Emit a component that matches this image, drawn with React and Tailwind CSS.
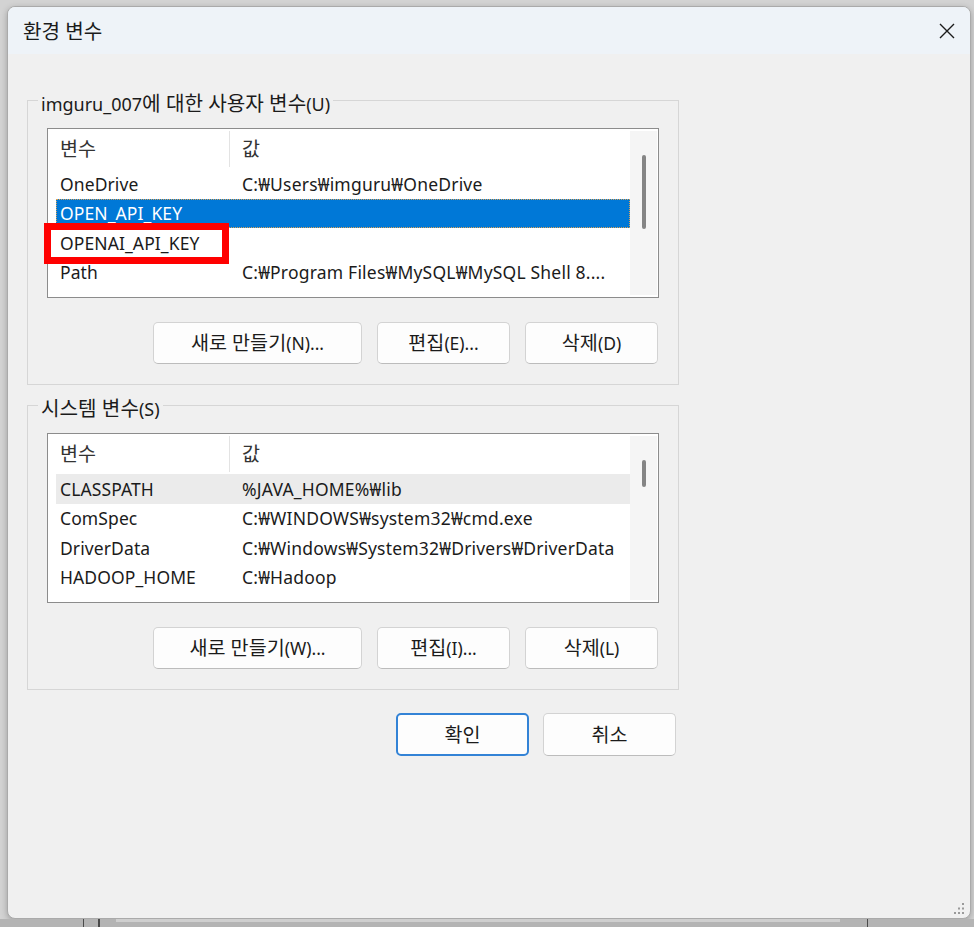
import React from "react";

function T({ s }) {
  const parts = s.split(/([\uAC00-\uD7A3]+(?:\s[\uAC00-\uD7A3]+)*)/);
  return (
    <>
      {parts.map((p, i) =>
        /[\uAC00-\uD7A3]/.test(p) ? (
          <span key={i} className="text-[1.12em]">
            {p}
          </span>
        ) : (
          <React.Fragment key={i}>{p}</React.Fragment>
        )
      )}
    </>
  );
}

const userRows = [
  { name: "OneDrive", value: "C:₩Users₩imguru₩OneDrive" },
  { name: "OPEN_API_KEY", value: "", sel: true },
  { name: "OPENAI_API_KEY", value: "" },
  { name: "Path", value: "C:₩Program Files₩MySQL₩MySQL Shell 8...." },
];

const sysRows = [
  { name: "CLASSPATH", value: "%JAVA_HOME%₩lib", hover: true },
  { name: "ComSpec", value: "C:₩WINDOWS₩system32₩cmd.exe" },
  { name: "DriverData", value: "C:₩Windows₩System32₩Drivers₩DriverData" },
  { name: "HADOOP_HOME", value: "C:₩Hadoop" },
];

function Btn({ children, className = "", primary = false }) {
  return (
    <div
      className={`flex items-center justify-center rounded-[5px] bg-[#fdfdfd] text-[17.5px] text-[#1b1b1b] ${
        primary
          ? "border-2 border-[#3383d6]"
          : "border border-[#d3d3d3] border-b-[#bcbcbc]"
      } ${className}`}
    >
      <T s={children} />
    </div>
  );
}

function VarList({ rows, thumb }) {
  return (
    <div className="flex h-[170px] w-[612px] overflow-hidden border border-[#8c8c8c] bg-white text-[17.5px]">
      <div className="flex min-w-0 flex-1 flex-col pl-[8px]">
        <div className="flex h-[40px] shrink-0 items-center text-[#333333]">
          <div className="flex h-[36px] w-[174px] items-center border-r border-[#e3e3e3] pl-[4px]">
            <T s="변수" />
          </div>
          <div className="pl-[12px]">
            <T s="값" />
          </div>
        </div>
        {rows.map((r) => (
          <div
            key={r.name}
            className={`flex h-[29.5px] shrink-0 items-center ${
              r.sel
                ? "bg-[#0078d7] text-white outline-1 outline-dotted outline-[#d8a25a] -outline-offset-1"
                : r.hover
                ? "bg-[#ebebeb]"
                : ""
            }`}
          >
            <div className="w-[186px] shrink-0 whitespace-nowrap pl-[4px] tracking-[0.1px]">{r.name}</div>
            <div className="min-w-0 flex-1 overflow-hidden whitespace-nowrap tracking-[0.2px]">{r.value}</div>
          </div>
        ))}
      </div>
      <div className="my-[2px] mr-[1px] flex w-[27px] shrink-0 flex-col items-center bg-[#f5f5f5]">
        <div className={`w-[4px] rounded-full bg-[#858585] ${thumb}`} />
      </div>
    </div>
  );
}

function Group({ label, rows, thumb, buttons, className = "" }) {
  return (
    <fieldset className={`w-[651px] border border-[#d6d6d6] ${className}`}>
      <legend className="ml-[10px] h-[30px] px-[3px] pt-[6px] text-[18px] leading-[24px] text-[#1b1b1b]">
        <T s={label} />
      </legend>
      <div className="px-[19px] pb-[20px] pt-[13px]">
        <VarList rows={rows} thumb={thumb} />
        <div className="mt-[24px] flex justify-end gap-[15px] pr-[1px]">
          <Btn className="h-[42px] w-[209px]">{buttons[0]}</Btn>
          <Btn className="h-[42px] w-[133px]">{buttons[1]}</Btn>
          <Btn className="h-[42px] w-[133px]">{buttons[2]}</Btn>
        </div>
      </div>
    </fieldset>
  );
}

export default function App() {
  return (
    <div className="relative flex h-[927px] w-[974px] flex-col overflow-hidden bg-[#d3d3d3] pl-[7px] pt-[6px] font-['Noto_Sans','Noto_Sans_CJK_KR',sans-serif] text-[17.5px] text-[#1b1b1b]">
      <div className="flex h-[913px] w-[964px] shrink-0 flex-col overflow-hidden rounded-[8px] border border-[#aaaaaa] bg-[#f0f0f0] shadow-[0_2px_6px_rgba(0,0,0,0.25)]">
        <div className="flex h-[47px] shrink-0 items-center justify-between bg-[#eef3f8] pl-[15px] pr-[15px]">
          <span className="pt-[1px] text-[18px] text-[#1b1b1b]">
            <T s="환경 변수" />
          </span>
          <svg width="16" height="16" viewBox="0 0 16 16" fill="none">
            <path d="M1 1L15 15M15 1L1 15" stroke="#1b1b1b" strokeWidth="1.4" />
          </svg>
        </div>
        <div className="flex flex-1 flex-col pl-[19px] pt-[31px]">
          <Group
            label="imguru_007에 대한 사용자 변수(U)"
            rows={userRows}
            thumb="mt-[24px] h-[74px]"
            buttons={["새로 만들기(N)...", "편집(E)...", "삭제(D)"]}
          />
          <Group
            className="mt-[5px]"
            label="시스템 변수(S)"
            rows={sysRows}
            thumb="mt-[24px] h-[27px]"
            buttons={["새로 만들기(W)...", "편집(I)...", "삭제(L)"]}
          />
          <div className="mt-[23px] flex w-[651px] justify-end gap-[14px] pr-[2px]">
            <Btn primary className="h-[43px] w-[133px]">확인</Btn>
            <Btn className="h-[43px] w-[133px]">취소</Btn>
          </div>
          <div className="mb-[3px] mr-[5px] mt-auto self-end">
            <svg width="12" height="12" viewBox="0 0 12 12">
              <rect x="9" y="0" width="2" height="2" fill="#9a9a9a" />
              <rect x="5" y="4.5" width="2" height="2" fill="#9a9a9a" />
              <rect x="9" y="4.5" width="2" height="2" fill="#9a9a9a" />
              <rect x="1" y="9" width="2" height="2" fill="#9a9a9a" />
              <rect x="5" y="9" width="2" height="2" fill="#9a9a9a" />
              <rect x="9" y="9" width="2" height="2" fill="#9a9a9a" />
            </svg>
          </div>
        </div>
      </div>
      <div className="ml-[-7px] flex h-[8px] w-[974px] shrink-0 bg-[#b4b4b4]">
        <div className="w-[83px]" />
        <div className="w-[1px] bg-[#4a4a4a]" />
        <div className="w-[14px]" />
        <div className="w-[2px] bg-[#4a4a4a]" />
        <div className="w-[16px]" />
        <div className="h-[3px] w-[724px] bg-[#cfcfcf]" />
        <div className="w-[27px]" />
        <div className="w-[1px] bg-[#4a4a4a]" />
      </div>
      <div className="pointer-events-none absolute left-[44px] top-[223px] h-[41px] w-[185px] border-[7px] border-[#ff0000]" />
    </div>
  );
}
